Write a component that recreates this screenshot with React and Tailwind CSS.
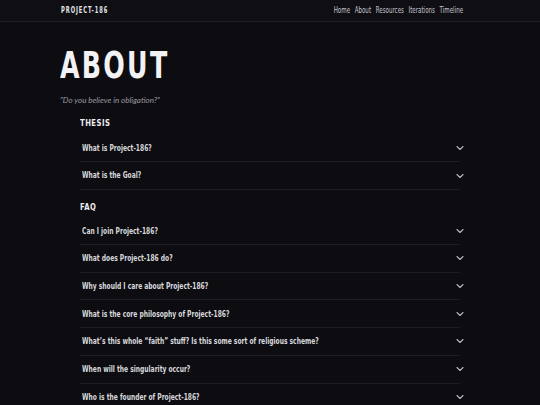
import { ChevronDown } from 'lucide-react'

const thesis = ['What is Project-186?', 'What is the Goal?']

const faq = [
  'Can I join Project-186?',
  'What does Project-186 do?',
  'Why should I care about Project-186?',
  'What is the core philosophy of Project-186?',
  'What\u2019s this whole \u201cfaith\u201d stuff? Is this some sort of religious scheme?',
  'When will the singularity occur?',
  'Who is the founder of Project-186?',
]

const cond = { fontFamily: '"DejaVu Sans Condensed", "DejaVu Sans", sans-serif' }

function Item({ q }) {
  return (
    <div className="flex h-[27.7px] items-center justify-between border-b border-[#1c1c22] pl-[2px]">
      <span className="inline-block origin-left scale-x-[0.8] whitespace-nowrap text-[8.3px] font-bold text-[#d8d8dc]">{q}</span>
      <ChevronDown className="mr-[-6px] h-[12px] w-[12px] shrink-0 text-[#b8b8c0]" strokeWidth={2.2} />
    </div>
  )
}

export default function App() {
  return (
    <div className="h-[405px] overflow-hidden bg-[#0c0c11]" style={cond}>
      <header className="flex h-[22px] items-center justify-between border-b border-[#1e1e24] bg-[#0e0e13] pl-[61px] pr-[77px]">
        <span className="inline-block origin-left scale-x-[0.72] text-[8px] font-bold tracking-[0.16em] text-[#e6e6ea]">PROJECT-186</span>
        <nav className="flex origin-right scale-x-[0.77] gap-[6px] text-[8px] text-[#c8c8d0]">
          <span>Home</span>
          <span>About</span>
          <span>Resources</span>
          <span>Iterations</span>
          <span>Timeline</span>
        </nav>
      </header>
      <main className="px-[60px]">
        <h1 className="mt-[24px] origin-left scale-x-[0.74] text-[38px] font-bold leading-none tracking-[0.08em] text-[#f2f2f4]">ABOUT</h1>
        <p className="mt-[10px] text-[8px] italic text-[#9a9aa2]" style={{ fontFamily: 'Lato, "Open Sans", sans-serif' }}>
          "Do you believe in obligation?"
        </p>
        <section className="mx-[20px] mt-[11px]">
          <h2 className="origin-left scale-x-[0.85] text-[9px] font-bold tracking-[0.06em] text-[#ececf0]">THESIS</h2>
          <div className="mt-[4px]">
            {thesis.map((q) => <Item key={q} q={q} />)}
          </div>
          <h2 className="mt-[11px] origin-left scale-x-[0.85] text-[9px] font-bold tracking-[0.06em] text-[#ececf0]">FAQ</h2>
          <div className="mt-[3px]">
            {faq.map((q) => <Item key={q} q={q} />)}
          </div>
        </section>
      </main>
    </div>
  )
}
